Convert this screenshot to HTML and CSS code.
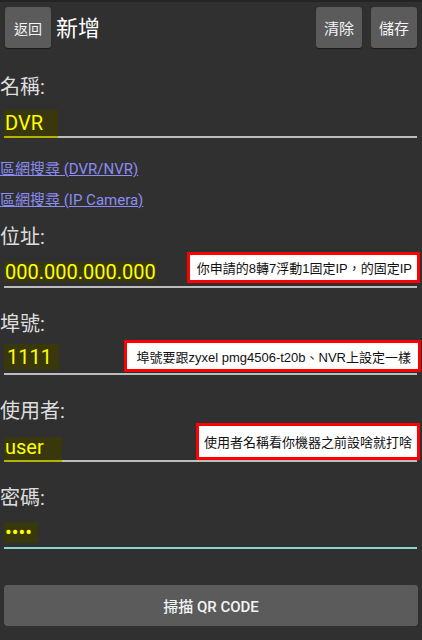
FILE: index.html
```html
<!DOCTYPE html>
<html lang="zh-Hant">
  <head>
    <meta charset="UTF-8" />
    <meta name="viewport" content="width=device-width, initial-scale=1.0" />
    <title>新增</title>
    <link rel="stylesheet" href="styles.css">
  </head>
  <body>
    <header class="toolbar">
      <button class="btn btn-back">返回</button>
      <h1 class="title">新增</h1>
      <div class="actions">
        <button class="btn">清除</button>
        <button class="btn">儲存</button>
      </div>
    </header>

    <main class="form">
      <div class="field field-name">
        <label class="field-label">名稱:</label>
        <div class="input">
          <span class="value value-over hl-name">DVR</span>
        </div>
      </div>

      <div class="links">
        <a class="link" href="#">區網搜尋 (DVR/NVR)</a>
        <a class="link" href="#">區網搜尋 (IP Camera)</a>
      </div>

      <div class="field">
        <label class="field-label">位址:</label>
        <div class="input">
          <span class="value hl-ip">000.000.000.000</span>
          <div class="note note-ip">你申請的8轉7浮動1固定IP，的固定IP</div>
        </div>
      </div>

      <div class="field">
        <label class="field-label">埠號:</label>
        <div class="input">
          <span class="value hl-port">1111</span>
          <div class="note note-port">埠號要跟zyxel pmg4506-t20b、NVR上設定一樣</div>
        </div>
      </div>

      <div class="field">
        <label class="field-label">使用者:</label>
        <div class="input">
          <span class="value value-over hl-user">user</span>
          <div class="note note-user">使用者名稱看你機器之前設啥就打啥</div>
        </div>
      </div>

      <div class="field">
        <label class="field-label">密碼:</label>
        <div class="input input-focus">
          <span class="value hl-pass">&bull;&bull;&bull;&bull;</span>
        </div>
      </div>
    </main>

    <footer class="footer">
      <button class="btn btn-wide">掃描 QR CODE</button>
    </footer>
  </body>
</html>
```

FILE: styles.css
```css
body {
  margin: 0;
  border-top: 2px solid #242424;
  background-color: #303030;
  font-family: Roboto, "Noto Sans CJK TC", sans-serif;
  color: #e0e0e0;
}

/* 頂部工具列 */
.toolbar {
  display: flex;
  align-items: center;
  height: 41px;
  padding: 5px 5px 0 5px;
}
.title {
  flex: 1;
  margin: 0 0 4px 5px;
  font-size: 22px;
  font-weight: 400;
  color: #fff;
}
.actions {
  display: flex;
  gap: 9px;
}
.btn {
  width: 46px;
  height: 41px;
  padding: 0;
  border: none;
  border-radius: 3px;
  background-color: #5b5b5b;
  box-shadow: 0 1px 1px rgba(0, 0, 0, 0.45);
  font-family: inherit;
  font-size: 15px;
  color: #f4f4f4;
}
.btn-back {
  font-size: 14px;
}

/* 表單 */
.form {
  padding: 26px 5px 0 0;
}
.field {
  margin-bottom: 23px;
}
.field-name {
  margin-bottom: 16px;
}
.field-label {
  display: block;
  font-size: 20px;
  line-height: 26px;
  color: #dedede;
}
.input {
  position: relative;
  display: flex;
  align-items: flex-end;
  height: 36px;
  margin-left: 4px;
  border-bottom: 2px solid #bdbdbd;
}
.input-focus {
  border-bottom-color: #88d6cf;
}
.value {
  display: inline-block;
  box-sizing: border-box;
  padding-left: 1px;
  margin-bottom: 3px;
  background-color: #38380c;
  font-size: 20px;
  color: #ffff00;
}
.value-over {
  margin-bottom: -2px;
  border-bottom: 2px solid #b4b400;
}
.hl-name {
  width: 54px;
  height: 28px;
  line-height: 26px;
}
.hl-ip {
  width: 152px;
  height: 20px;
  line-height: 20px;
  margin-bottom: 4px;
}
.hl-port {
  width: 55px;
  height: 26px;
  line-height: 26px;
  padding-left: 3px;
}
.hl-user {
  width: 58px;
  height: 25px;
  line-height: 21px;
}
.hl-pass {
  width: 34px;
  height: 21px;
  line-height: 21px;
  margin-bottom: 4px;
}

.links {
  margin-bottom: 8px;
}
.link {
  display: block;
  line-height: 31px;
  font-size: 15px;
  color: #8c8cf2;
}

/* 紅框註解 */
.note {
  position: absolute;
  right: -3px;
  display: flex;
  align-items: center;
  padding: 0 4px;
  border: 3px solid #ff0000;
  background-color: #fff;
  font-family: "Liberation Sans", "Noto Sans CJK TC", sans-serif;
  font-size: 13px;
  color: #111;
  white-space: nowrap;
}
.note-ip {
  top: 2px;
  height: 25px;
  padding: 0 5px 0 7px;
}
.note-port {
  top: 3px;
  right: -4px;
  height: 26px;
  padding: 0 7px 0 9px;
}
.note-user {
  top: -1px;
  height: 31px;
  padding: 0 5px;
}

.footer {
  padding: 13px 4px 0;
}
.btn-wide {
  width: 100%;
  font-weight: 500;
}
```
